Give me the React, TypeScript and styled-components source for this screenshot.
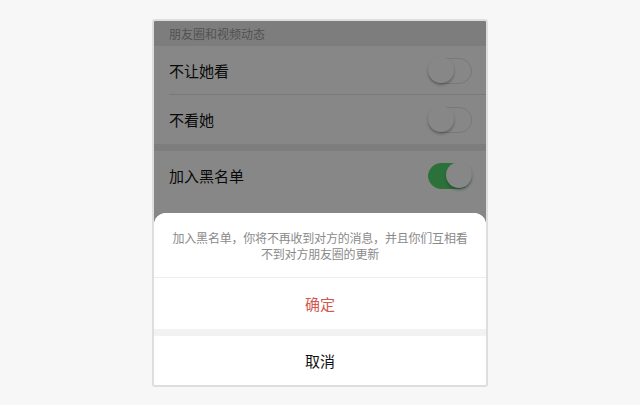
import React from "react";
import styled, { createGlobalStyle } from "styled-components";

const GlobalStyle = createGlobalStyle`
  html, body {
    margin: 0;
    padding: 0;
    background: #f7f7f7;
    font-family: "Noto Sans CJK SC", "Noto Sans", sans-serif;
  }
`;

const Page = styled.div`
  width: 640px;
  height: 405px;
  padding-top: 19px;
  box-sizing: border-box;
  display: flex;
  justify-content: center;
`;

const Phone = styled.div`
  position: relative;
  width: 332px;
  height: 364px;
  border: 2px solid #dedede;
  border-radius: 3px;
  background: #ededed;
  overflow: hidden;
`;

const SectionTitle = styled.div`
  height: 25px;
  padding: 0 15px;
  display: flex;
  align-items: center;
  font-size: 12px;
  color: #999;
  background: #ededed;
`;

const Group = styled.div<{ gapTop?: boolean }>`
  background: #fff;
  margin-top: ${(p) => (p.gapTop ? "7px" : "0")};
`;

const Row = styled.div<{ divider?: boolean }>`
  position: relative;
  height: 49px;
  padding: 0 14px 0 15px;
  display: flex;
  align-items: center;
  justify-content: space-between;

  ${(p) =>
    p.divider &&
    `
    &::after {
      content: "";
      position: absolute;
      left: 15px;
      right: 0;
      bottom: 0;
      height: 1px;
      background: #e5e5e5;
    }
  `}
`;

const Label = styled.span`
  font-size: 15px;
  color: #111;
`;

const Track = styled.div<{ on?: boolean }>`
  position: relative;
  width: 44px;
  height: 26px;
  box-sizing: border-box;
  border-radius: 13px;
  border: 1.5px solid ${(p) => (p.on ? "#52d66c" : "#e2e2e2")};
  background: ${(p) => (p.on ? "#52d66c" : "#fff")};
`;

const Knob = styled.div<{ on?: boolean }>`
  position: absolute;
  top: -1.5px;
  left: ${(p) => (p.on ? "16.5px" : "-1.5px")};
  width: 26px;
  height: 26px;
  border-radius: 50%;
  background: #fff;
  box-shadow: 0 2px 3px rgba(0, 0, 0, 0.28);
`;

const Switch = ({ on }: { on?: boolean }) => (
  <Track on={on}>
    <Knob on={on} />
  </Track>
);

const Mask = styled.div`
  position: absolute;
  inset: 0;
  background: rgba(0, 0, 0, 0.47);
`;

const Sheet = styled.div`
  position: absolute;
  left: 0;
  right: 0;
  bottom: 0;
  background: #f2f2f2;
  border-radius: 12px 12px 0 0;
  overflow: hidden;
`;

const Message = styled.div`
  height: 65px;
  padding: 2px 6px 0;
  box-sizing: border-box;
  display: flex;
  flex-direction: column;
  align-items: center;
  justify-content: center;
  text-align: center;
  font-size: 12px;
  line-height: 16px;
  letter-spacing: -0.2px;
  white-space: nowrap;
  color: #8a8a8a;
  background: #fff;
  border-bottom: 1px solid #ececec;
`;

const Action = styled.div<{ danger?: boolean; gapTop?: boolean }>`
  height: ${(p) => (p.gapTop ? "49px" : "51px")};
  margin-top: ${(p) => (p.gapTop ? "7px" : "0")};
  display: flex;
  align-items: center;
  justify-content: center;
  font-size: 15px;
  color: ${(p) => (p.danger ? "#d4574f" : "#111")};
  background: #fff;
`;

export default function App() {
  return (
    <>
      <GlobalStyle />
      <Page>
        <Phone>
          <SectionTitle>朋友圈和视频动态</SectionTitle>
          <Group>
            <Row divider>
              <Label>不让她看</Label>
              <Switch />
            </Row>
            <Row>
              <Label>不看她</Label>
              <Switch />
            </Row>
          </Group>
          <Group gapTop>
            <Row>
              <Label>加入黑名单</Label>
              <Switch on />
            </Row>
            <Row />
          </Group>
          <Mask />
          <Sheet>
            <Message>
              <span>加入黑名单，你将不再收到对方的消息，并且你们互相看</span>
              <span>不到对方朋友圈的更新</span>
            </Message>
            <Action danger>确定</Action>
            <Action gapTop>取消</Action>
          </Sheet>
        </Phone>
      </Page>
    </>
  );
}
